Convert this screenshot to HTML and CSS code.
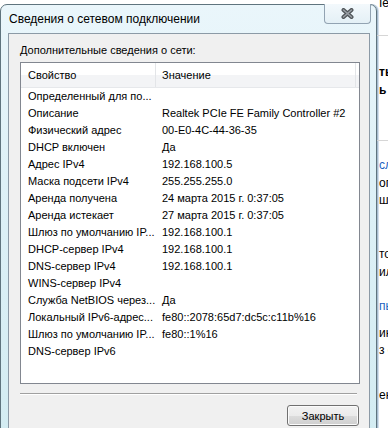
FILE: index.html
```html
<!DOCTYPE html>
<html lang="ru">
<head>
    <meta charset="UTF-8">
    <title>Сведения о сетевом подключении</title>
    <link rel="stylesheet" href="styles.css">
</head>
<body>
<div class="desktop">
    <div class="dialog">
        <div class="titlebar">
            <span class="title">Сведения о сетевом подключении</span>
            <div class="close">
                <svg width="13" height="11" viewBox="0 0 13 11">
                    <path d="M2.5 2 L10.5 9 M10.5 2 L2.5 9" stroke="#4f5458" stroke-width="4" stroke-linecap="round"/>
                    <path d="M2.5 2 L10.5 9 M10.5 2 L2.5 9" stroke="#9aa0a6" stroke-width="1.6" stroke-linecap="round"/>
                </svg>
            </div>
        </div>
        <div class="client">
            <div class="group-label">Дополнительные сведения о сети:</div>
            <div class="listview">
                <div class="lv-head">
                    <div class="c1">Свойство</div>
                    <div class="c2">Значение</div>
                    <div class="c3"></div>
                </div>
                <div class="lv-row"><div class="c1">Определенный для по...</div><div class="c2"></div></div>
                <div class="lv-row"><div class="c1">Описание</div><div class="c2">Realtek PCIe FE Family Controller #2</div></div>
                <div class="lv-row"><div class="c1">Физический адрес</div><div class="c2">00-E0-4C-44-36-35</div></div>
                <div class="lv-row"><div class="c1">DHCP включен</div><div class="c2">Да</div></div>
                <div class="lv-row"><div class="c1">Адрес IPv4</div><div class="c2">192.168.100.5</div></div>
                <div class="lv-row"><div class="c1">Маска подсети IPv4</div><div class="c2">255.255.255.0</div></div>
                <div class="lv-row"><div class="c1">Аренда получена</div><div class="c2">24 марта 2015 г. 0:37:05</div></div>
                <div class="lv-row"><div class="c1">Аренда истекает</div><div class="c2">27 марта 2015 г. 0:37:05</div></div>
                <div class="lv-row"><div class="c1">Шлюз по умолчанию IP...</div><div class="c2">192.168.100.1</div></div>
                <div class="lv-row"><div class="c1">DHCP-сервер IPv4</div><div class="c2">192.168.100.1</div></div>
                <div class="lv-row"><div class="c1">DNS-сервер IPv4</div><div class="c2">192.168.100.1</div></div>
                <div class="lv-row"><div class="c1">WINS-сервер IPv4</div><div class="c2"></div></div>
                <div class="lv-row"><div class="c1">Служба NetBIOS через...</div><div class="c2">Да</div></div>
                <div class="lv-row"><div class="c1">Локальный IPv6-адрес...</div><div class="c2">fe80::2078:65d7:dc5c:c11b%16</div></div>
                <div class="lv-row"><div class="c1">Шлюз по умолчанию IP...</div><div class="c2">fe80::1%16</div></div>
                <div class="lv-row"><div class="c1">DNS-сервер IPv6</div><div class="c2"></div></div>
            </div>
            <div class="sep"></div>
            <div class="actions">
                <button class="btn">Закрыть</button>
            </div>
        </div>
    </div>
    <div class="behind">
        <div class="ln top">Іесо</div>
        <div class="rule r1"></div>
        <div class="ln bold g28">ть</div>
        <div class="ln bold g2">ь</div>
        <div class="rule g42"></div>
        <div class="ln link g16">сл</div>
        <div class="ln g2">ог</div>
        <div class="ln g1">шр</div>
        <div class="ln g38">тор</div>
        <div class="ln g2">ил</div>
        <div class="ln link g18">пь</div>
        <div class="ln g11">инт</div>
        <div class="ln g1">з о</div>
        <div class="ln g29">ен</div>
    </div>
</div>
</body>
</html>
```

FILE: styles.css
```css
*{
    margin: 0;
    padding: 0;
    box-sizing: border-box;
}
body{
    width: 388px;
    height: 428px;
    overflow: hidden;
    background: #fff;
    font-family: "Liberation Sans", Arial, sans-serif;
    font-size: 11px;
    color: #000;
}
.desktop{
    display: flex;
    align-items: flex-start;
    height: 428px;
    overflow: hidden;
}

/* dialog frame */
.dialog{
    flex: none;
    width: 377px;
    height: 440px;
    margin-top: 4px;
    border: 1px solid #5f747e;
    border-radius: 7px 7px 0 0;
    background: linear-gradient(#eaf6fb, #def1f7 40%, #d3ecf2);
    padding: 0 6px 0 7px;
    display: flex;
    flex-direction: column;
    box-shadow: 1px 0 0 #a7bccf, 2px 0 0 #d3e0ec;
}
.titlebar{
    height: 28px;
    display: flex;
    justify-content: space-between;
    align-items: flex-start;
}
.title{
    font-size: 12px;
    line-height: 28px;
    padding-left: 1px;
}
.close{
    width: 47px;
    height: 20px;
    margin-top: -1px;
    margin-right: -1px;
    border: 1px solid #92a3b2;
    border-top: none;
    border-radius: 0 0 4px 4px;
    background: linear-gradient(#f3f9fc, #e4f0f6);
    display: flex;
    align-items: center;
    justify-content: center;
}
.close svg{
    display: block;
}

/* client area */
.client{
    flex: 1;
    border: 1px solid #8c9aa6;
    border-bottom: none;
    background: #f0f0f0;
    padding: 9px 9px 0 11px;
}
.group-label{
    line-height: 15px;
    margin-bottom: 4px;
}
.listview{
    width: 340px;
    height: 322px;
    border: 1px solid #828790;
    background: #fff;
}
.lv-head{
    display: grid;
    grid-template-columns: 135px 200px 1fr;
    height: 25px;
    line-height: 24px;
    background: linear-gradient(#fff 50%, #f3f4f6 50%);
    border-bottom: 1px solid #e6e8eb;
}
.lv-head .c1,
.lv-head .c2{
    border-right: 1px solid #e3e5e8;
}
.lv-row{
    display: grid;
    grid-template-columns: 135px 1fr;
    height: 17px;
    line-height: 17px;
}
.c1{
    padding-left: 7px;
    white-space: nowrap;
    overflow: hidden;
}
.c2{
    padding-left: 6px;
    white-space: nowrap;
    overflow: hidden;
}
.lv-row:first-of-type{
    margin-top: 0;
}
.sep{
    width: 337px;
    height: 2px;
    margin-top: 9px;
    border-top: 1px solid #a0a0a0;
    border-bottom: 1px solid #fff;
}
.actions{
    display: flex;
    justify-content: flex-end;
    padding-right: 1px;
}
.btn{
    width: 72px;
    height: 21px;
    margin-top: 10px;
    border: 1px solid #707070;
    border-radius: 3px;
    background: linear-gradient(#f2f2f2, #ebebeb 50%, #dddddd 50%, #cfcfcf);
    box-shadow: inset 0 0 0 1px #fbfbfb;
    font-family: "Liberation Sans", Arial, sans-serif;
    font-size: 11px;
    color: #000;
}

/* window behind the dialog */
.behind{
    flex: 1;
    height: 428px;
    overflow: hidden;
    display: flex;
    flex-direction: column;
    padding-left: 2px;
    font-size: 12px;
    white-space: nowrap;
}
.ln{
    height: 16px;
    line-height: 16px;
    flex: none;
}
.rule{
    height: 1px;
    flex: none;
    background: #d6d6d6;
    margin-left: -2px;
}
.top{ margin-top: -5px; }
.r1{ margin-top: 24px; }
.bold{ font-weight: bold; }
.link{ color: #1b5fbf; }
.g1{ margin-top: 1px; }
.g2{ margin-top: 2px; }
.g11{ margin-top: 11px; }
.g16{ margin-top: 16px; }
.g18{ margin-top: 18px; }
.g28{ margin-top: 28px; }
.g29{ margin-top: 29px; }
.g38{ margin-top: 38px; }
.g42{ margin-top: 42px; }
```
